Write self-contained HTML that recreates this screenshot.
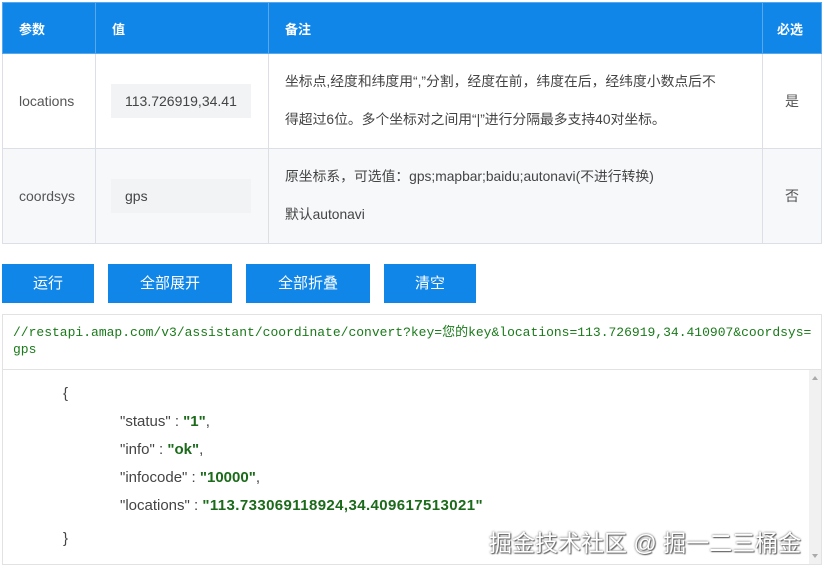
<!DOCTYPE html><html><head><meta charset="utf-8"><style>
body{margin:0;width:824px;height:569px;background:#fff;font-family:"Liberation Sans","Noto Sans CJK SC",sans-serif;position:relative;overflow:hidden;color:#333}
table{position:absolute;left:2px;top:2px;width:820px;border-collapse:collapse;font-size:14px;table-layout:fixed}
td,th{border:1px solid #dcdfe6;padding:0}
th{background:#1086e8;color:#fff;text-align:left;padding-left:16px;height:50px;font-weight:bold;font-size:13px;border-color:#5aa8ec}
td{color:#555}
.r1 td{height:94px}.r2 td{height:94px;background:#f7f8fa}
.inp{background:#f2f3f5;height:34px;line-height:34px;margin-left:15px;width:126px;padding-left:14px;font-size:14px;color:#444;overflow:hidden;white-space:nowrap}
.note{font-size:13.8px;line-height:38px;padding-left:16px;color:#444;white-space:nowrap}
.btn{position:absolute;top:264px;height:39px;background:#1086e8;color:#fff;font-size:15px;text-align:center;line-height:40px}
.url{position:absolute;left:2px;top:314px;width:820px;height:56px;border:1px solid #e2e2e2;font-family:"Liberation Mono","Noto Sans CJK SC",monospace;font-size:13px;color:#1a7a1a;line-height:17px;padding:9px 4px 0 10px;box-sizing:border-box;word-break:break-all}
.json{position:absolute;left:2px;top:369px;width:820px;height:196px;border:1px solid #e2e2e2;box-sizing:border-box;font-size:15px;color:#444}
.json div{position:absolute;white-space:nowrap}
.v{color:#1a6a1a;font-weight:bold}
.sb{position:absolute;right:0;top:0;width:12px;height:194px;background:#f1f1f1}
</style></head><body>
<table>
<colgroup><col style="width:93px"><col style="width:173px"><col style="width:494px"><col></colgroup>
<tr><th>参数</th><th>值</th><th>备注</th><th style="padding-left:14px">必选</th></tr>
<tr class="r1"><td style="padding-left:16px">locations</td><td><div class="inp">113.726919,34.41</div></td><td class="note">坐标点,经度和纬度用“,”分割，经度在前，纬度在后，经纬度小数点后不<br>得超过6位。多个坐标对之间用“|”进行分隔最多支持40对坐标。</td><td style="text-align:center">是</td></tr>
<tr class="r2"><td style="padding-left:16px">coordsys</td><td><div class="inp">gps</div></td><td class="note">原坐标系，可选值：gps;mapbar;baidu;autonavi(不进行转换)<br>默认autonavi</td><td style="text-align:center">否</td></tr>
</table>
<div class="btn" style="left:2px;width:92px">运行</div>
<div class="btn" style="left:108px;width:124px">全部展开</div>
<div class="btn" style="left:246px;width:124px">全部折叠</div>
<div class="btn" style="left:384px;width:92px">清空</div>
<div class="url">//restapi.amap.com/v3/assistant/coordinate/convert?key=您的key&amp;locations=113.726919,34.410907&amp;coordsys=gps</div>
<div class="json">
<div style="left:60px;top:15px">{</div>
<div style="left:117px;top:43px">"status" : <span class="v">"1"</span>,</div>
<div style="left:117px;top:71px">"info" : <span class="v">"ok"</span>,</div>
<div style="left:117px;top:99px">"infocode" : <span class="v">"10000"</span>,</div>
<div style="left:117px;top:127px">"locations" : <span class="v" style="letter-spacing:0.4px">"113.733069118924,34.409617513021"</span></div>
<div style="left:60px;top:160px">}</div>
<div style="left:486px;top:154px;font-size:23px;color:#fff;text-shadow:0 0 2px #555,1px 1px 1px #666">掘金技术社区 @ 掘一二三桶金</div>
<div class="sb"><div style="left:3px;top:6px;width:0;height:0;border:3px solid transparent;border-bottom:4px solid #aaa;border-top:0"></div><div style="left:3px;bottom:6px;width:0;height:0;border:3px solid transparent;border-top:4px solid #aaa;border-bottom:0"></div></div>
</div>
</body></html>
